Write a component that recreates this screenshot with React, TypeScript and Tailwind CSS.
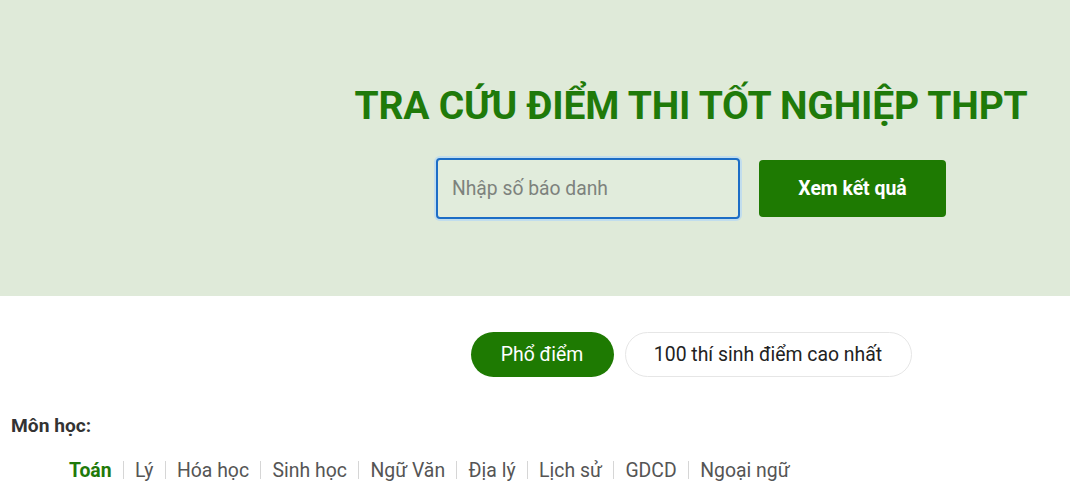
import React from "react";

export default function App() {
  const subjects = ["Toán", "Lý", "Hóa học", "Sinh học", "Ngữ Văn", "Địa lý", "Lịch sử", "GDCD", "Ngoại ngữ"];
  return (
    <div className="w-[1070px] h-[498px] bg-white overflow-hidden" style={{ fontFamily: "Roboto, 'Noto Sans', sans-serif" }}>
      <div className="h-[296px] bg-[#dfead9] flex">
        <div className="w-[312px] shrink-0" />
        <div className="flex-1 flex flex-col items-center pt-[81px]">
          <h1 className="text-[39px] leading-[50px] font-bold text-[#1f7a0a] tracking-[-0.2px]">TRA CỨU ĐIỂM THI TỐT NGHIỆP THPT</h1>
          <div className="flex items-center gap-[19px] mt-[27px]">
            <div className="w-[304px] h-[61px] rounded-[4px] border-2 border-[#1c6dc6] bg-[#e1ecdc] shadow-[0_0_0_2px_rgba(180,215,245,0.7)] flex items-center px-[14px] pt-[2px]">
              <span className="text-[19.3px] text-[#7d827d]">Nhập số báo danh</span>
            </div>
            <button className="w-[187px] h-[57px] rounded-[4px] bg-[#1e7a02] text-white text-[19.4px] font-bold">Xem kết quả</button>
          </div>
        </div>
      </div>
      <div className="flex">
        <div className="w-[312px] shrink-0" />
        <div className="flex-1 flex justify-center gap-[11px] pt-[36px]">
          <div className="h-[45px] w-[143px] rounded-full bg-[#1e7a02] text-white text-[19.4px] flex items-center justify-center">Phổ điểm</div>
          <div className="h-[45px] w-[287px] rounded-full border border-[#e6e6e6] text-[#222] text-[19.4px] flex items-center justify-center">100 thí sinh điểm cao nhất</div>
        </div>
      </div>
      <div className="pl-[11px] pt-[35px] text-[19.2px] font-bold text-[#333]">Môn học:</div>
      <div className="pl-[69px] pt-[15px] flex items-center text-[19.4px] text-[#555]">
        {subjects.map((s, i) => (
          <React.Fragment key={s}>
            {i > 0 && <span className="mx-[11.25px] w-px h-[18px] bg-[#d6d6d6]" />}
            <span className={i === 0 ? "text-[#1f7a0a] font-bold" : ""}>{s}</span>
          </React.Fragment>
        ))}
      </div>
    </div>
  );
}
